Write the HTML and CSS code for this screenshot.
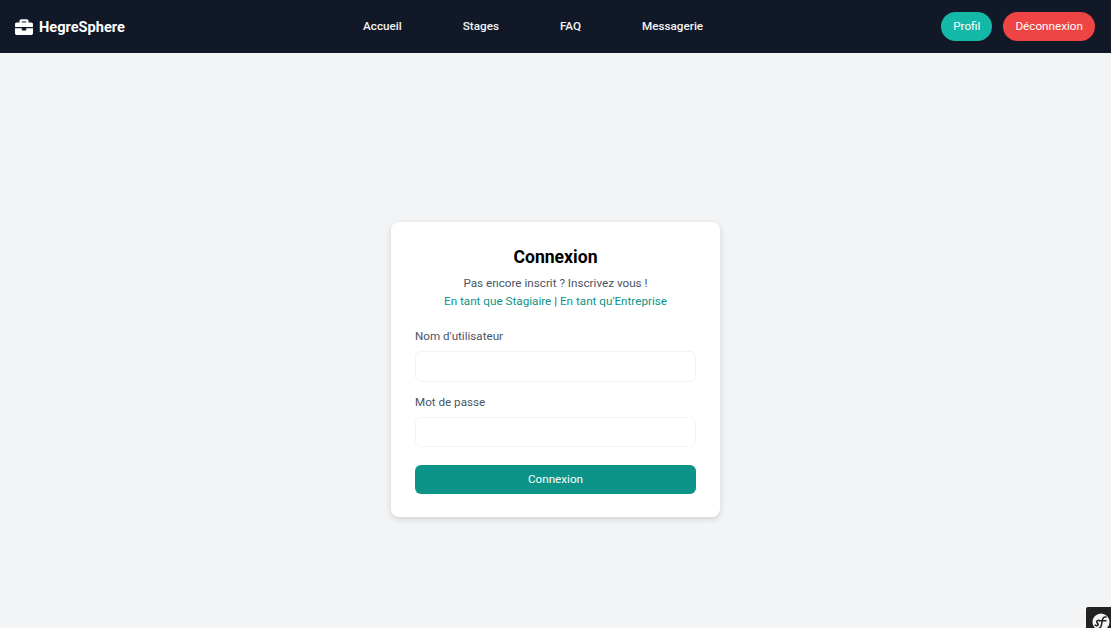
FILE: index.html
```html
<!DOCTYPE html>
<html lang="fr">
<head>
<meta charset="utf-8">
<title>HegreSphere</title>
<link rel="stylesheet" href="styles.css">
</head>
<body>
<nav class="nav">
  <a class="brand" href="#">
    <svg class="brand-icon" viewBox="0 0 512 512" aria-hidden="true"><path fill="#fff" d="M320 336c0 8.840-7.160 16-16 16h-96c-8.840 0-16-7.160-16-16v-48H0v144c0 25.600 22.400 48 48 48h416c25.600 0 48-22.400 48-48V288H320v48zm144-208h-80V80c0-25.600-22.400-48-48-48H176c-25.600 0-48 22.400-48 48v48H48c-25.600 0-48 22.400-48 48v80h512v-80c0-25.600-22.400-48-48-48zm-144 0H192V96h128v32z"/></svg>
    <span>HegreSphere</span>
  </a>
  <div class="links">
    <a href="#">Accueil</a>
    <a href="#">Stages</a>
    <a href="#">FAQ</a>
    <a href="#">Messagerie</a>
  </div>
  <div class="actions">
    <a class="pill pill-teal" href="#">Profil</a>
    <a class="pill pill-red" href="#">Déconnexion</a>
  </div>
</nav>
<main class="main">
  <form class="card">
    <h1 class="title">Connexion</h1>
    <p class="intro">Pas encore inscrit ? Inscrivez vous !<br><a href="#">En tant que Stagiaire</a> | <a href="#">En tant qu'Entreprise</a></p>
    <label class="label" for="u">Nom d'utilisateur</label>
    <input class="input" id="u" type="text">
    <label class="label" for="p">Mot de passe</label>
    <input class="input" id="p" type="password">
    <button class="submit" type="button">Connexion</button>
  </form>
</main>
<div class="sf-toolbar">
  <span class="sf-logo">
    <svg viewBox="0 0 20 20" aria-hidden="true"><circle cx="10" cy="10" r="9.500" fill="#f5f5f5"/><path fill="none" stroke="#222" stroke-width="1.700" stroke-linecap="round" d="M3.500 13.500c1 .8 2.200.8 3 0 .8-.9.100-1.800-.7-2.500-.9-.8-.9-2 .2-2.600 1-.5 2-.2 2.500.4M8 17c1.500-.5 2-1.700 2.400-3.500l1.300-6c.4-2 1.400-3.500 3.800-3M9.500 8.500h6"/></svg>
  </span>
</div>
</body>
</html>
```
FILE: styles.css
```css
* { box-sizing: border-box; }
html, body { height: 100%; }
body {
  margin: 0;
  background: #f3f4f6;
  font-family: Roboto, "Liberation Sans", sans-serif;
  font-size: 12px;
  display: flex;
  flex-direction: column;
  overflow: hidden;
}
a { text-decoration: none; color: inherit; }
.nav {
  height: 53px;
  flex: none;
  background: #111827;
  display: flex;
  justify-content: space-between;
  align-items: center;
  padding: 0 16px 0 15px;
  color: #fff;
}
.brand {
  display: flex;
  align-items: center;
  gap: 6px;
  font-size: 14.600px;
  font-weight: 700;
}
.brand-icon { width: 18px; height: 18px; }
.links {
  display: flex;
  gap: 61px;
  font-size: 11.700px;
  font-weight: 500;
  color: #f3f4f6;
  padding-bottom: 2px;
}
.actions { display: flex; justify-content: flex-end; gap: 11px; }
.pill {
  height: 29px;
  padding: 0 12px 1px;
  border-radius: 15px;
  display: flex;
  align-items: center;
  font-size: 11.700px;
  color: #fff;
}
.pill-teal { background: #14b8a6; }
.pill-red { background: #ef4444; }
.main {
  flex: 1;
  display: flex;
  justify-content: center;
  align-items: flex-start;
  padding-top: 169px;
}
.card {
  width: 329px;
  height: 295px;
  background: #fff;
  border-radius: 8px;
  box-shadow: 0 2px 6px rgba(0,0,0,.14);
  padding: 24px;
  display: flex;
  flex-direction: column;
}
.card > * { flex: none; }
.title {
  margin: 0;
  font-size: 17.600px;
  line-height: 22px;
  font-weight: 700;
  text-align: center;
  color: #000;
}
.intro {
  margin: 7px 0 0;
  font-size: 11.700px;
  line-height: 17.500px;
  text-align: center;
  color: #4b5563;
}
.intro a { color: #0d9488; }
.label {
  font-size: 11.650px;
  line-height: 16px;
  color: #4b5563;
  margin-top: 18px;
  margin-bottom: 7px;
}
.input + .label { margin-top: 12px; }
.input {
  height: 30.500px;
  width: 100%;
  border: 1px solid #f3f4f6;
  border-radius: 6px;
  background: #fff;
  outline: none;
}
.submit {
  margin-top: 18px;
  height: 29px;
  padding: 0 0 1px;
  border: 0;
  border-radius: 6px;
  background: #0d9488;
  color: #fff;
  font: 400 11.700px Roboto, "Liberation Sans", sans-serif;
}
.sf-toolbar {
  position: fixed;
  right: 0;
  bottom: 0;
  width: 25px;
  height: 21px;
  background: #222;
  border-radius: 2px 0 0 0;
  padding: 6px 0 0 6px;
  overflow: hidden;
}
.sf-logo { display: block; width: 18px; height: 18px; }
.sf-logo svg { display: block; width: 18px; height: 18px; }
```
